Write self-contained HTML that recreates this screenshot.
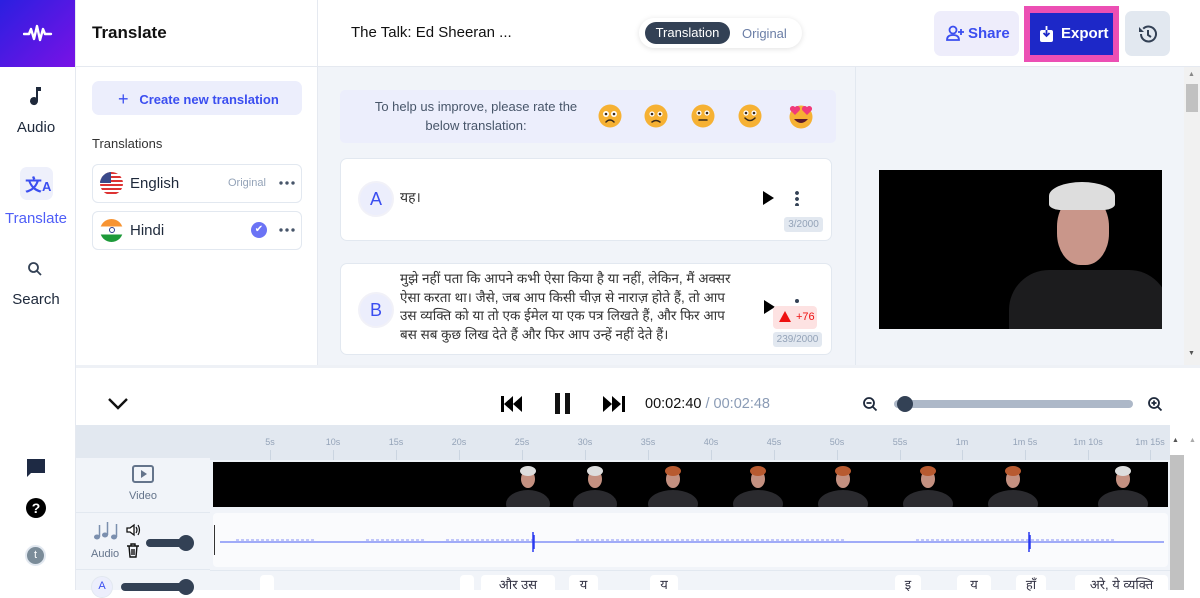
<!DOCTYPE html>
<html><head><meta charset="utf-8"><style>
*{box-sizing:border-box;margin:0;padding:0}
body{width:1200px;height:590px;overflow:hidden;font-family:"Liberation Sans","Noto Sans CJK SC",sans-serif;background:#fff;position:relative;color:#1e293b}
.a{position:absolute}
.dev{font-family:"Liberation Sans","Noto Sans CJK SC","DejaVu Sans",sans-serif}
.chip{position:absolute;top:575px;height:20px;background:#fff;border-radius:4px;font-size:13px;color:#334;text-align:center;line-height:20px}
.tk{position:absolute;top:437px;font-size:9px;color:#94a3b8;transform:translateX(-50%)}
.tl{position:absolute;top:450px;width:1px;height:10px;background:#cbd5e1}
.dots{position:absolute;width:18px;height:4px;background:radial-gradient(circle,#475569 1.6px,transparent 1.9px) 0 0/6px 4px}
</style></head><body>
<!-- left nav -->
<div class="a" style="left:0;top:0;width:76px;height:67px;background:linear-gradient(135deg,#2b1fe0,#7a12e6)"></div>
<svg class="a" style="left:23px;top:24px" width="30" height="20" viewBox="0 0 30 20"><path d="M1 10h5l2-5 3 10 3-13 3 14 3-11 2 5h6" stroke="#fff" stroke-width="2.4" fill="none" stroke-linejoin="round" stroke-linecap="round"/></svg>
<div class="a" style="left:75px;top:0;width:1px;height:590px;background:#e5e9f0"></div>
<svg class="a" style="left:28px;top:86px" width="16" height="20" viewBox="0 0 16 20"><path d="M8 1h5v4H10v10a4 4 0 1 1-2-3.4z" fill="#1e293b"/></svg>
<div class="a" style="left:0;width:72px;top:119px;text-align:center;font-size:15px;color:#1e293b">Audio</div>
<div class="a" style="left:20px;top:167px;width:33px;height:33px;background:#eef0fb;border-radius:7px"></div>
<div class="a" style="left:25px;top:171px;font-size:17px;font-weight:bold;color:#3b4ef0">文<span style="font-size:13px">A</span></div>
<div class="a" style="left:0;width:72px;top:210px;text-align:center;font-size:15px;color:#4f5ef7">Translate</div>
<svg class="a" style="left:27px;top:261px" width="16" height="16" viewBox="0 0 16 16"><circle cx="6.5" cy="6.5" r="4.5" stroke="#334155" stroke-width="1.8" fill="none"/><path d="M10 10l4 4" stroke="#334155" stroke-width="1.8"/></svg>
<div class="a" style="left:0;width:72px;top:291px;text-align:center;font-size:15px;color:#1e293b">Search</div>
<svg class="a" style="left:25px;top:457px" width="22" height="21" viewBox="0 0 22 21"><path d="M2 2h18v14H6l-4 4z" fill="#1e2a44"/></svg>
<svg class="a" style="left:25px;top:497px" width="22" height="22" viewBox="0 0 22 22"><circle cx="11" cy="11" r="10" fill="#000"/><text x="11" y="16" font-size="14" font-weight="bold" fill="#fff" text-anchor="middle" font-family="Liberation Sans">?</text></svg>
<div class="a" style="left:25px;top:545px;width:21px;height:21px;border-radius:50%;background:#7b8c99;border:2px solid #e2e8f0;color:#fff;font-size:11px;text-align:center;line-height:17px">t</div>
<!-- panel -->
<div class="a" style="left:92px;top:23px;font-size:17px;font-weight:bold;color:#111">Translate</div>
<div class="a" style="left:76px;top:66px;width:242px;height:1px;background:#e5e9f0"></div>
<div class="a" style="left:317px;top:0;width:1px;height:365px;background:#e5e9f0"></div>
<div class="a" style="left:92px;top:81px;width:210px;height:34px;background:#eceefc;border-radius:7px;color:#3b4ef0;font-size:13px;font-weight:bold;line-height:34px;padding-left:26px"><span style="font-size:18px;font-weight:normal;position:relative;top:1px">+</span>&nbsp;&nbsp; Create new translation</div>
<div class="a" style="left:92px;top:136px;font-size:13px;color:#333">Translations</div>
<div class="a" style="left:92px;top:164px;width:210px;height:39px;border:1px solid #e2e8f0;border-radius:6px"></div>
<div class="a" style="left:100px;top:172px;width:23px;height:23px;border-radius:50%;background:repeating-linear-gradient(#d33 0 2px,#fff 2px 4px);overflow:hidden"><div style="width:11px;height:11px;background:#3a4a8a"></div></div>
<div class="a" style="left:130px;top:175px;font-size:15px;color:#1e293b">English</div>
<div class="a" style="left:228px;top:177px;font-size:11px;color:#94a3b8">Original</div>
<div class="dots" style="left:278px;top:181px"></div>
<div class="a" style="left:92px;top:211px;width:210px;height:39px;border:1px solid #e2e8f0;border-radius:6px"></div>
<div class="a" style="left:100px;top:219px;width:23px;height:23px;border-radius:50%;background:linear-gradient(#f79433 0 33%,#fff 33% 67%,#1e9a3a 67%)"><div style="margin:8px auto;width:6px;height:6px;border:1px solid #2a3a8a;border-radius:50%"></div></div>
<div class="a" style="left:130px;top:222px;font-size:15px;color:#1e293b">Hindi</div>
<div class="a" style="left:251px;top:222px;width:16px;height:16px;border-radius:50%;background:#6b73f5;color:#fff;font-size:10px;text-align:center;line-height:16px">✔</div>
<div class="dots" style="left:278px;top:228px"></div>
<!-- topbar -->
<div class="a" style="left:351px;top:24px;font-size:15px;color:#111">The Talk: Ed Sheeran ...</div>
<div class="a" style="left:639px;top:18px;width:163px;height:30px;border-radius:15px;background:#fff;box-shadow:0 1px 6px rgba(0,0,0,.12)"></div>
<div class="a" style="left:645px;top:22px;width:85px;height:22px;border-radius:11px;background:#334155;color:#fff;font-size:13px;text-align:center;line-height:22px">Translation</div>
<div class="a" style="left:742px;top:26px;font-size:13px;color:#6b7ea6">Original</div>
<div class="a" style="left:934px;top:11px;width:85px;height:45px;border-radius:7px;background:#eeedfb;color:#3b4ef0;font-size:15px;font-weight:bold;line-height:45px;padding-left:34px">Share</div>
<svg class="a" style="left:946px;top:25px" width="20" height="16" viewBox="0 0 20 16"><circle cx="7" cy="5" r="3.5" stroke="#3b4ef0" stroke-width="1.8" fill="none"/><path d="M1 15c0-4 3-5 6-5s6 1 6 5z M15 4v6M12 7h6" stroke="#3b4ef0" stroke-width="1.8" fill="none"/></svg>
<div class="a" style="left:1024px;top:6px;width:95px;height:56px;background:#ec4fb4"></div>
<div class="a" style="left:1030px;top:13px;width:83px;height:42px;background:#1d28c8;color:#fff;font-size:15px;font-weight:bold;line-height:42px;padding-left:31px">Export</div>
<svg class="a" style="left:1039px;top:25px" width="16" height="18" viewBox="0 0 16 18"><rect x="1" y="5" width="13" height="12" rx="2" fill="#fff"/><path d="M7.5 1v10M4.5 8l3 3 3-3" stroke="#1d28c8" stroke-width="1.8" fill="none"/><path d="M7.5 1v4" stroke="#fff" stroke-width="1.8"/></svg>
<div class="a" style="left:1125px;top:11px;width:45px;height:45px;border-radius:7px;background:#e2e8f0"></div>
<svg class="a" style="left:1137px;top:23px" width="22" height="22" viewBox="0 0 22 22"><path d="M4 11a7.5 7.5 0 1 0 2.2-5.3" stroke="#334155" stroke-width="2" fill="none"/><path d="M2 4v5h5" fill="#334155"/><path d="M11 7v5l3 2" stroke="#334155" stroke-width="2" fill="none"/></svg>
<div class="a" style="left:318px;top:66px;width:882px;height:1px;background:#e5e9f0"></div>
<!-- content -->
<div class="a" style="left:318px;top:67px;width:537px;height:298px;background:#f1f4f9"></div>
<div class="a" style="left:855px;top:67px;width:1px;height:298px;background:#e2e8f0"></div>
<div class="a" style="left:856px;top:67px;width:328px;height:298px;background:#f1f4f9"></div>
<div class="a" style="left:1184px;top:67px;width:16px;height:298px;background:#f1f1f1"></div>
<div class="a" style="left:1186px;top:84px;width:12px;height:28px;background:#c1c1c1"></div>
<div class="a" style="left:1188px;top:71px;font-size:7px;color:#888">▲</div>
<div class="a" style="left:1188px;top:350px;font-size:7px;color:#555">▼</div>
<div class="a" style="left:879px;top:170px;width:283px;height:159px;background:#000;overflow:hidden">
<div class="a" style="left:130px;top:100px;width:160px;height:80px;background:#1c1c1e;border-radius:40px 40px 0 0"></div>
<div class="a" style="left:178px;top:25px;width:52px;height:70px;background:#c9968a;border-radius:45%"></div>
<div class="a" style="left:170px;top:12px;width:66px;height:28px;background:#ddd;border-radius:50% 50% 20% 20%"></div>
</div>
<div class="a" style="left:340px;top:90px;width:496px;height:53px;background:#eceefc;border-radius:5px"></div>
<div class="a" style="left:368px;top:97px;width:216px;text-align:center;font-size:13px;line-height:19px;color:#475569">To help us improve, please rate the below translation:</div>
<svg class="a" style="left:597px;top:103px" width="220" height="26" viewBox="0 0 220 26">
<g fill="#f6b133">
<circle cx="13" cy="13" r="11.5"/><circle cx="59" cy="13" r="11.5"/><circle cx="106" cy="13" r="11.5"/><circle cx="153" cy="13" r="11.5"/><circle cx="204" cy="14" r="11.5"/></g>
<g fill="#fff"><circle cx="9" cy="11" r="3"/><circle cx="17" cy="11" r="3"/><circle cx="55" cy="11" r="2.6"/><circle cx="63" cy="11" r="2.6"/><circle cx="102" cy="10" r="2.6"/><circle cx="110" cy="10" r="2.6"/><circle cx="149" cy="10" r="2.6"/><circle cx="157" cy="10" r="2.6"/></g>
<g fill="#3a2a1a"><circle cx="9" cy="11" r="1.3"/><circle cx="17" cy="11" r="1.3"/><circle cx="55" cy="11" r="1.3"/><circle cx="63" cy="11" r="1.3"/><circle cx="102" cy="10" r="1.3"/><circle cx="110" cy="10" r="1.3"/><circle cx="149" cy="10" r="1.3"/><circle cx="157" cy="10" r="1.3"/></g>
<g stroke="#3a2a1a" stroke-width="1.5" fill="none" stroke-linecap="round"><path d="M9 19q4-4 8 0M55 19q4-3 8 0M102 17h8M148 15q5 5 10 0"/></g>
<path d="M197 16q7 8 14 0z" fill="#5a1a2a"/>
<g fill="#f03a7a"><path d="M198 4c-3-3-7 1-4 4l4 4 4-4c3-3-1-7-4-4z"/><path d="M210 4c-3-3-7 1-4 4l4 4 4-4c3-3-1-7-4-4z"/></g>
</svg>
<div class="a" style="left:340px;top:158px;width:492px;height:83px;background:#fff;border:1px solid #e2e8f0;border-radius:7px"></div>
<div class="a" style="left:358px;top:181px;width:36px;height:36px;border-radius:50%;background:#eceefc;border:2px solid #f1f1f8;color:#3b4ef0;font-size:18px;text-align:center;line-height:32px">A</div>
<div class="a dev" style="left:400px;top:188px;font-size:14px;color:#333">यह।</div>
<div class="a" style="left:763px;top:191px;width:0;height:0;border-left:11px solid #000;border-top:7px solid transparent;border-bottom:7px solid transparent"></div>
<div class="a" style="left:795px;top:190px;width:4px;height:16px;background:radial-gradient(circle,#334155 1.8px,transparent 2px) 0 0/4px 6px"></div>
<div class="a" style="left:784px;top:217px;width:39px;height:15px;background:#e2e8f0;border-radius:3px;font-size:10px;color:#94a3b8;text-align:center;line-height:15px">3/2000</div>
<div class="a" style="left:340px;top:263px;width:492px;height:92px;background:#fff;border:1px solid #e2e8f0;border-radius:7px"></div>
<div class="a" style="left:358px;top:292px;width:36px;height:36px;border-radius:50%;background:#eceefc;border:2px solid #f1f1f8;color:#3b4ef0;font-size:18px;text-align:center;line-height:32px">B</div>
<div class="a dev" style="left:400px;top:270px;width:345px;font-size:13.5px;line-height:18.7px;color:#333">मुझे नहीं पता कि आपने कभी ऐसा किया है या नहीं, लेकिन, मैं अक्सर ऐसा करता था। जैसे, जब आप किसी चीज़ से नाराज़ होते हैं, तो आप उस व्यक्ति को या तो एक ईमेल या एक पत्र लिखते हैं, और फिर आप बस सब कुछ लिख देते हैं और फिर आप उन्हें नहीं देते हैं।</div>
<div class="a" style="left:764px;top:300px;width:0;height:0;border-left:11px solid #000;border-top:7px solid transparent;border-bottom:7px solid transparent"></div>
<div class="a" style="left:795px;top:299px;width:4px;height:4px;border-radius:50%;background:#334155"></div>
<div class="a" style="left:773px;top:306px;width:44px;height:23px;background:#fde2e2;border-radius:4px;color:#e11;font-size:11px;line-height:23px;padding-left:23px">+76</div>
<div class="a" style="left:779px;top:311px;width:0;height:0;border-bottom:11px solid #e11;border-left:6px solid transparent;border-right:6px solid transparent"></div>
<div class="a" style="left:773px;top:332px;width:49px;height:15px;background:#e2e8f0;border-radius:3px;font-size:10px;color:#94a3b8;text-align:center;line-height:15px">239/2000</div>
<!-- player -->
<div class="a" style="left:76px;top:365px;width:1124px;height:3px;background:#eef1f6"></div>
<svg class="a" style="left:107px;top:397px" width="22" height="14" viewBox="0 0 22 14"><path d="M2 2l9 9 9-9" stroke="#111" stroke-width="2.4" fill="none"/></svg>
<svg class="a" style="left:500px;top:395px" width="24" height="18" viewBox="0 0 24 18"><rect x="1" y="1" width="3" height="16"/><path d="M13 1v16L4 9zM22 1v16L13 9z"/></svg>
<div class="a" style="left:555px;top:393px;width:5px;height:21px;background:#111"></div>
<div class="a" style="left:565px;top:393px;width:5px;height:21px;background:#111"></div>
<svg class="a" style="left:602px;top:395px" width="24" height="18" viewBox="0 0 24 18"><path d="M1 1v16l9-8zM10 1v16l9-8z"/><rect x="20" y="1" width="3" height="16"/></svg>
<div class="a" style="left:645px;top:396px;font-size:14.5px;color:#111">00:02:40 <span style="color:#8a9bb5">/ 00:02:48</span></div>
<svg class="a" style="left:862px;top:396px" width="16" height="16" viewBox="0 0 16 16"><circle cx="7" cy="7" r="5" stroke="#1e293b" stroke-width="1.8" fill="none"/><path d="M4.5 7h5M11 11l3.5 3.5" stroke="#1e293b" stroke-width="1.8"/></svg>
<div class="a" style="left:894px;top:400px;width:239px;height:8px;border-radius:4px;background:#adb8c8"></div>
<div class="a" style="left:897px;top:396px;width:16px;height:16px;border-radius:50%;background:#334155"></div>
<svg class="a" style="left:1147px;top:396px" width="16" height="16" viewBox="0 0 16 16"><circle cx="7" cy="7" r="5" stroke="#1e293b" stroke-width="1.8" fill="none"/><path d="M4.5 7h5M7 4.5v5M11 11l3.5 3.5" stroke="#1e293b" stroke-width="1.8"/></svg>
<!-- timeline -->
<div class="a" style="left:76px;top:425px;width:1107px;height:165px;background:#e2e8f0"></div>
<div class="a" style="left:1170px;top:425px;width:30px;height:165px;background:#fff"></div>
<div class="a" style="left:1170px;top:455px;width:14px;height:135px;background:#c1c1c1"></div>
<div class="a" style="left:1172px;top:437px;font-size:7px;color:#555">▲</div>
<div class="a" style="left:1189px;top:437px;font-size:7px;color:#aaa">▲</div>
<div class="a" style="left:76px;top:458px;width:134px;height:132px;background:#f1f4f9"></div>
<div class="a" style="left:76px;top:512px;width:134px;height:1px;background:#e2e8f0"></div>
<div class="a" style="left:76px;top:569px;width:134px;height:1px;background:#e2e8f0"></div>
<div class="a" style="left:210px;top:460px;width:960px;height:130px;background:#eef2f7"></div>
<div class="a" style="left:210px;top:510px;width:960px;height:60px;background:#f1f4f9"></div>
<div class="a" style="left:210px;top:570px;width:960px;height:20px;background:#f1f4f9;border-top:1px solid #e2e8f0"></div>
<div class="tk" style="left:270px">5s</div><div class="tl" style="left:270px"></div>
<div class="tk" style="left:333px">10s</div><div class="tl" style="left:333px"></div>
<div class="tk" style="left:396px">15s</div><div class="tl" style="left:396px"></div>
<div class="tk" style="left:459px">20s</div><div class="tl" style="left:459px"></div>
<div class="tk" style="left:522px">25s</div><div class="tl" style="left:522px"></div>
<div class="tk" style="left:585px">30s</div><div class="tl" style="left:585px"></div>
<div class="tk" style="left:648px">35s</div><div class="tl" style="left:648px"></div>
<div class="tk" style="left:711px">40s</div><div class="tl" style="left:711px"></div>
<div class="tk" style="left:774px">45s</div><div class="tl" style="left:774px"></div>
<div class="tk" style="left:837px">50s</div><div class="tl" style="left:837px"></div>
<div class="tk" style="left:900px">55s</div><div class="tl" style="left:900px"></div>
<div class="tk" style="left:962px">1m</div><div class="tl" style="left:962px"></div>
<div class="tk" style="left:1025px">1m 5s</div><div class="tl" style="left:1025px"></div>
<div class="tk" style="left:1088px">1m 10s</div><div class="tl" style="left:1088px"></div>
<div class="tk" style="left:1150px">1m 15s</div><div class="tl" style="left:1150px"></div>
<div class="a" style="left:213px;top:462px;width:955px;height:45px;background:#000;overflow:hidden">
<svg width="955" height="45">
<g fill="#2a2a2e"><ellipse cx="315" cy="42" rx="22" ry="14"/><ellipse cx="382" cy="42" rx="22" ry="14"/><ellipse cx="460" cy="42" rx="25" ry="14"/><ellipse cx="545" cy="42" rx="25" ry="14"/><ellipse cx="630" cy="42" rx="25" ry="14"/><ellipse cx="715" cy="42" rx="25" ry="14"/><ellipse cx="800" cy="42" rx="25" ry="14"/><ellipse cx="910" cy="42" rx="25" ry="14"/></g>
<g fill="#c49080"><ellipse cx="315" cy="17" rx="7" ry="9"/><ellipse cx="382" cy="17" rx="7" ry="9"/><ellipse cx="460" cy="17" rx="7" ry="9"/><ellipse cx="545" cy="17" rx="7" ry="9"/><ellipse cx="630" cy="17" rx="7" ry="9"/><ellipse cx="715" cy="17" rx="7" ry="9"/><ellipse cx="800" cy="17" rx="7" ry="9"/><ellipse cx="910" cy="17" rx="7" ry="9"/></g>
<g fill="#ddd"><ellipse cx="315" cy="9" rx="8" ry="5"/><ellipse cx="382" cy="9" rx="8" ry="5"/><ellipse cx="910" cy="9" rx="8" ry="5"/></g>
<g fill="#b85a30"><ellipse cx="460" cy="9" rx="8" ry="5"/><ellipse cx="545" cy="9" rx="8" ry="5"/><ellipse cx="630" cy="9" rx="8" ry="5"/><ellipse cx="715" cy="9" rx="8" ry="5"/><ellipse cx="800" cy="9" rx="8" ry="5"/></g>
</svg></div>
<svg class="a" style="left:131px;top:464px" width="24" height="20" viewBox="0 0 24 20"><rect x="2" y="2" width="20" height="16" rx="2" stroke="#64748b" stroke-width="2" fill="none"/><path d="M10 6v8l6-4z" fill="#64748b"/></svg>
<div class="a" style="left:76px;top:490px;width:134px;text-align:center;font-size:11px;color:#64748b">Video</div>
<svg class="a" style="left:93px;top:521px" width="26" height="20" viewBox="0 0 26 20"><g fill="#7b8fae"><ellipse cx="4" cy="16" rx="3" ry="2.5"/><ellipse cx="12" cy="14" rx="3" ry="2.5"/><ellipse cx="21" cy="16" rx="3" ry="2.5"/></g><g stroke="#7b8fae" stroke-width="1.5"><path d="M6.5 16V4M14.5 14V1M23.5 16V3"/></g></svg>
<div class="a" style="left:91px;top:548px;font-size:11px;color:#64748b">Audio</div>
<svg class="a" style="left:125px;top:523px" width="16" height="14" viewBox="0 0 16 14"><path d="M2 5h3l4-3v10l-4-3H2z" stroke="#111" stroke-width="1.3" fill="#fff"/><path d="M11 4q2 3 0 6M13 2q3 5 0 10" stroke="#111" stroke-width="1.2" fill="none"/></svg>
<svg class="a" style="left:126px;top:543px" width="14" height="15" viewBox="0 0 14 15"><path d="M1 3h12M5 3V1h4v2M3 3l1 11h6l1-11M6 6v6M8 6v6" stroke="#111" stroke-width="1.4" fill="none"/></svg>
<div class="a" style="left:146px;top:539px;width:44px;height:8px;border-radius:4px;background:#334155"></div>
<div class="a" style="left:178px;top:535px;width:16px;height:16px;border-radius:50%;background:#334155"></div>
<div class="a" style="left:91px;top:576px;width:22px;height:22px;border-radius:50%;background:#eceefc;border:1px solid #e2e8f0;color:#3b4ef0;font-size:11px;text-align:center;line-height:18px">A</div>
<div class="a" style="left:121px;top:583px;width:70px;height:8px;border-radius:4px;background:#334155"></div>
<div class="a" style="left:178px;top:579px;width:16px;height:16px;border-radius:50%;background:#334155"></div>
<div class="a" style="left:213px;top:513px;width:955px;height:54px;background:#fafbfd;border-radius:4px"></div>
<div class="a" style="left:214px;top:525px;width:1px;height:30px;background:#333"></div>
<svg class="a" style="left:216px;top:525px" width="952" height="32" viewBox="0 0 952 32">
<path d="M4 17H948" stroke="#6b7bf5" stroke-width="1.3"/>
<path d="M20 15h80M150 15h60M230 15h90M360 15h120M480 15h150M700 15h200" stroke="#8590f5" stroke-width="1" stroke-dasharray="3 2"/>
<path d="M317 7v20M318 10v14M813 7v20M814 10v14" stroke="#2a3af0" stroke-width="1.5"/>
</svg>
<div class="chip" style="left:260px;width:14px"></div>
<div class="chip" style="left:460px;width:14px"></div>
<div class="chip dev" style="left:481px;width:74px">और उस</div>
<div class="chip dev" style="left:569px;width:29px">य</div>
<div class="chip dev" style="left:650px;width:28px">य</div>
<div class="chip dev" style="left:895px;width:26px">इ</div>
<div class="chip dev" style="left:957px;width:34px">य</div>
<div class="chip dev" style="left:1016px;width:30px">हाँ</div>
<div class="chip dev" style="left:1075px;width:93px">अरे, ये व्यक्ति</div>
</body></html>
